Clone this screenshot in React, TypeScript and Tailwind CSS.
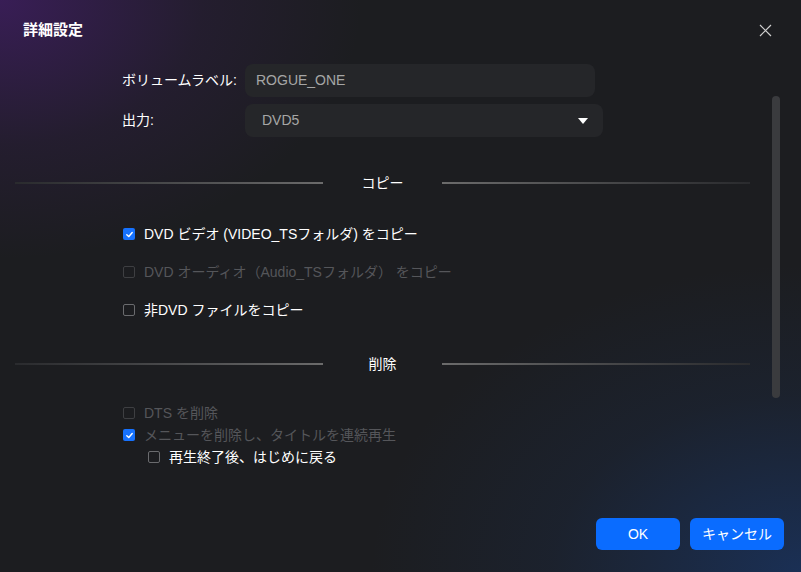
import { useState } from "react";

const jp = "font-['Liberation_Sans','Noto_Sans_CJK_JP',sans-serif]";

function Divider({ label }: { label: string }) {
  return (
    <div className="flex items-center h-[20px]">
      <div className="ml-[15px] w-[308px] h-[2px] bg-gradient-to-r from-[#2a2b2e] to-[#6b6b6b]" />
      <div className="w-[119px] text-center text-[14px] text-white">{label}</div>
      <div className="w-[308px] h-[2px] bg-gradient-to-r from-[#6b6b6b] to-[#2a2b2e]" />
    </div>
  );
}

function Check({
  label,
  checked,
  disabled,
  dimText,
  onChange,
}: {
  label: string;
  checked: boolean;
  disabled?: boolean;
  dimText?: boolean;
  onChange?: (v: boolean) => void;
}) {
  const grey = disabled || dimText;
  return (
    <div
      className="flex items-center gap-[9px] cursor-default"
      onClick={() => !disabled && onChange && onChange(!checked)}
    >
      {checked ? (
        <span className="flex items-center justify-center w-[12px] h-[12px] rounded-[2px] bg-[#1672ff]">
          <svg width="9" height="9" viewBox="0 0 10 10" fill="none">
            <path d="M2 5.2 L4.2 7.3 L8 2.8" stroke="white" strokeWidth="1.6" strokeLinecap="round" strokeLinejoin="round" />
          </svg>
        </span>
      ) : (
        <span
          className={`w-[12px] h-[12px] rounded-[2px] border ${disabled ? "border-[#3e3f42]" : "border-[#6a6b6e]"}`}
        />
      )}
      <span className={`text-[14px] leading-none ${grey ? "text-[#55565a]" : "text-white"}`}>{label}</span>
    </div>
  );
}

export default function App() {
  const [c1, setC1] = useState(true);
  const [c3, setC3] = useState(false);
  const [c6, setC6] = useState(false);

  return (
    <div className={`relative w-[801px] h-[572px] overflow-hidden bg-[#1c1d20] ${jp}`}>
      <div className="absolute inset-0 pointer-events-none bg-[radial-gradient(ellipse_at_0%_0%,rgba(80,30,130,0.55)_0%,rgba(80,30,130,0.15)_18%,transparent_32%)]" />
      <div className="absolute inset-0 pointer-events-none bg-[radial-gradient(ellipse_at_100%_100%,rgba(25,60,120,0.6)_0%,rgba(25,60,120,0.15)_22%,transparent_38%)]" />

      <div className="relative flex flex-col h-full">
        <div className="flex items-center justify-between h-[60px] pl-[23px] pr-[29px]">
          <span className="text-[15px] font-bold text-white">詳細設定</span>
          <svg width="13" height="13" viewBox="0 0 13 13" className="text-[#cfcfcf]">
            <path d="M1 1 L12 12 M12 1 L1 12" stroke="currentColor" strokeWidth="1.2" />
          </svg>
        </div>

        <div className="flex flex-col gap-[7px] mt-[4px] pl-[122px]">
          <div className="flex items-center">
            <span className="w-[123px] text-[14px] text-white">ボリュームラベル:</span>
            <div className="flex items-center w-[350px] h-[33px] rounded-[8px] bg-[#252629] px-[11px] text-[14px] text-[#a6a6a6]">
              ROGUE_ONE
            </div>
          </div>
          <div className="flex items-center">
            <span className="w-[123px] text-[14px] text-white">出力:</span>
            <div className="flex items-center justify-between w-[358px] h-[33px] rounded-[8px] bg-[#252629] pl-[17px] pr-[15px] text-[14px] text-[#a6a6a6]">
              DVD5
              <svg width="10" height="6" viewBox="0 0 10 6">
                <path d="M0 0 H10 L5 6 Z" fill="white" />
              </svg>
            </div>
          </div>
        </div>

        <div className="mt-[36px]">
          <Divider label="コピー" />
        </div>

        <div className="flex flex-col gap-[24px] mt-[34px] pl-[123px]">
          <Check label="DVD ビデオ (VIDEO_TSフォルダ) をコピー" checked={c1} onChange={setC1} />
          <Check label="DVD オーディオ（Audio_TSフォルダ） をコピー" checked={false} disabled />
          <Check label="非DVD ファイルをコピー" checked={c3} onChange={setC3} />
        </div>

        <div className="mt-[37px]">
          <Divider label="削除" />
        </div>

        <div className="flex flex-col gap-[8px] mt-[32px] pl-[123px]">
          <Check label="DTS を削除" checked={false} disabled />
          <Check label="メニューを削除し、タイトルを連続再生" checked dimText />
          <div className="pl-[25px]">
            <Check label="再生終了後、はじめに戻る" checked={c6} onChange={setC6} />
          </div>
        </div>

        <div className="flex justify-end gap-[10px] mt-auto mb-[22px] pr-[17px]">
          <button className="w-[84px] h-[32px] rounded-[6px] bg-[#0a6cff] text-[14px] text-white">OK</button>
          <button className="w-[94px] h-[32px] rounded-[6px] bg-[#0a6cff] text-[14px] text-white">キャンセル</button>
        </div>
      </div>

      <div className="absolute left-[772px] top-[96px] w-[8px] h-[302px] rounded-full bg-[#3a3b3e]" />
    </div>
  );
}
